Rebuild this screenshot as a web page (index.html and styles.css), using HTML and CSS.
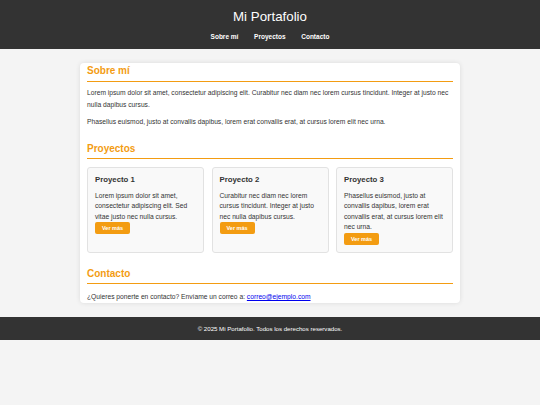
FILE: index.html
```html
<!DOCTYPE html>
<html lang="es">
<head>
<meta charset="utf-8">
<title>Mi Portafolio</title>
<link rel="stylesheet" href="styles.css">
</head>
<body>
<header class="site-header">
  <h1 class="site-title">Mi Portafolio</h1>
  <nav class="site-nav">
    <a href="#sobre">Sobre mí</a>
    <a href="#proyectos">Proyectos</a>
    <a href="#contacto">Contacto</a>
  </nav>
</header>
<main class="container">
  <section id="sobre" class="section">
    <h2 class="section-title">Sobre mí</h2>
    <p class="text">Lorem ipsum dolor sit amet, consectetur adipiscing elit. Curabitur nec diam nec lorem cursus tincidunt. Integer at justo nec nulla dapibus cursus.</p>
    <p class="text">Phasellus euismod, justo at convallis dapibus, lorem erat convallis erat, at cursus lorem elit nec urna.</p>
  </section>
  <section id="proyectos" class="section">
    <h2 class="section-title">Proyectos</h2>
    <div class="projects">
      <article class="project">
        <h3 class="project-title">Proyecto 1</h3>
        <p class="project-text">Lorem ipsum dolor sit amet, consectetur adipiscing elit. Sed vitae justo nec nulla cursus.</p>
        <a class="btn" href="#">Ver más</a>
      </article>
      <article class="project">
        <h3 class="project-title">Proyecto 2</h3>
        <p class="project-text">Curabitur nec diam nec lorem cursus tincidunt. Integer at justo nec nulla dapibus cursus.</p>
        <a class="btn" href="#">Ver más</a>
      </article>
      <article class="project">
        <h3 class="project-title">Proyecto 3</h3>
        <p class="project-text">Phasellus euismod, justo at convallis dapibus, lorem erat convallis erat, at cursus lorem elit nec urna.</p>
        <a class="btn" href="#">Ver más</a>
      </article>
    </div>
  </section>
  <section id="contacto" class="section">
    <h2 class="section-title">Contacto</h2>
    <p class="text contact">¿Quieres ponerte en contacto? Envíame un correo a: <a href="#">correo@ejemplo.com</a></p>
  </section>
</main>
<footer class="site-footer">
  <p>© 2025 Mi Portafolio. Todos los derechos reservados.</p>
</footer>
</body>
</html>
```

FILE: styles.css
```css
* { box-sizing: border-box; }

body {
  margin: 0;
  background: #f4f4f4;
  color: #333;
  font-family: "Liberation Sans", Arial, sans-serif;
}

.site-header {
  background: #333;
  color: #fff;
  text-align: center;
  padding: 9px 0 8px;
}

.site-title {
  margin: 0;
  font-size: 13.3px;
  line-height: 16px;
  font-weight: normal;
}

.site-nav {
  margin-top: 8px;
  display: flex;
  justify-content: center;
  gap: 15.7px;
}

.site-nav a {
  color: #fff;
  text-decoration: none;
  font-weight: bold;
  font-size: 6.5px;
  line-height: 8px;
}

.container {
  width: 380px;
  margin: 14px auto 0;
  background: #fff;
  border-radius: 4px;
  box-shadow: 0 0 5px rgba(0, 0, 0, 0.1);
  padding: 2px 7px 0;
}

.section + .section { margin-top: 15px; }

.section-title {
  margin: 0;
  color: #f39c12;
  font-size: 10px;
  line-height: 12px;
  padding-bottom: 3.5px;
  border-bottom: 1px solid #f39c12;
}

.text {
  margin: 5.5px 0 0;
  font-size: 6.7px;
  line-height: 11.7px;
}

.text + .text { margin-top: 5.5px; }

.contact { margin-top: 7px; }

.contact a { color: #0000ee; }

.projects {
  margin-top: 8px;
  display: grid;
  grid-template-columns: repeat(3, 1fr);
  gap: 7.5px;
}

.project {
  background: #f9f9f9;
  border: 1px solid #e2e2e2;
  border-radius: 3px;
  padding: 7px;
}

.project-title {
  margin: 0;
  font-size: 7.8px;
  line-height: 10px;
}

.project-text {
  margin: 5.8px 0 0;
  font-size: 6.7px;
  line-height: 10.4px;
}

.btn {
  display: block;
  width: max-content;
  background: #f39c12;
  color: #fff;
  text-decoration: none;
  font-weight: bold;
  font-size: 5.5px;
  line-height: 6px;
  padding: 3px 7px;
  border-radius: 2px;
}

.site-footer {
  margin-top: 14px;
  background: #333;
  color: #fff;
  text-align: center;
  height: 23px;
  display: flex;
  align-items: center;
  justify-content: center;
}

.site-footer p {
  margin: 0;
  font-size: 6.1px;
}
```
